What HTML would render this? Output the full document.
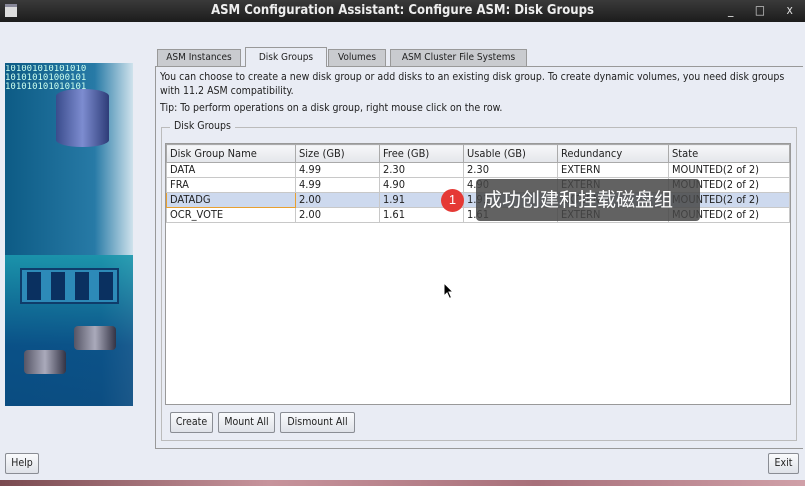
<!DOCTYPE html><html><head><meta charset="utf-8"><style>
*{box-sizing:border-box}body{margin:0;width:805px;height:486px;overflow:hidden;background:#e9ecf4;font-family:"DejaVu Sans Condensed","DejaVu Sans","Liberation Sans",sans-serif;font-size:10px;color:#222;position:relative}
.a{position:absolute}
.tb{left:0;top:0;width:805px;height:22px;background:linear-gradient(#3a3a3a,#1c1c1c);color:#eee;font-weight:bold;font-size:13px;text-align:center;line-height:21px}
.tab{top:49px;height:17px;border:1px solid #999;border-bottom:none;background:#c9cbcf;line-height:16px;font-size:10px;white-space:nowrap;text-align:center;overflow:hidden}
.btn{border:1px solid #8a8d94;border-radius:2px;background:linear-gradient(#fafbfd,#dfe2e8);height:21px;line-height:19px;text-align:center;font-size:10.5px}
table{border-collapse:collapse;font-size:11px}
td{border:1px solid #c8c8c8;height:15px;padding:0 3px;line-height:14px;white-space:nowrap}
th{border:1px solid #aaa;background:linear-gradient(#f6f7f9,#e4e6ea);font-weight:normal;text-align:left;height:18px;padding:0 3px}
</style></head><body>
<div class="a tb">ASM Configuration Assistant: Configure ASM: Disk Groups</div>
<div class="a" style="left:5px;top:4px;width:12px;height:13px;background:#ddd;border-top:3px solid #889"></div>
<div class="a" style="left:728px;top:3px;color:#ddd;font-size:12px;letter-spacing:9px">_ □ x</div>
<div class="a" style="left:5px;top:63px;width:128px;height:343px;background:linear-gradient(90deg,#0b5f8f 0,#1a6f9c 75%,#b8d4e2 100%)"></div>
<div class="a" style="left:5px;top:63px;width:128px;height:192px;background:linear-gradient(90deg,#0d5b85 0,#277aa6 70%,#cfe2ec 100%)"></div>
<div class="a" style="left:5px;top:255px;width:128px;height:151px;background:linear-gradient(#1c98ad,#0a4f86 60%,#0a4a7f);opacity:.9"></div>
<div class="a" style="left:5px;top:65px;color:#cfe;font-family:'DejaVu Sans Mono';font-size:9px;line-height:9px;width:128px;overflow:hidden;white-space:nowrap">101001010101010<br>101010101000101<br>101010101010101</div>
<div class="a" style="left:56px;top:89px;width:53px;height:58px;border-radius:26px/7px;background:linear-gradient(90deg,#3a4c8c,#7d8cd0,#2e3c78)"></div>
<div class="a" style="left:20px;top:268px;width:99px;height:36px;background:#2d8ab8;border:2px solid #0f3c6a"></div>
<div class="a" style="left:27px;top:272px;width:14px;height:28px;background:#0a3060"></div><div class="a" style="left:51px;top:272px;width:14px;height:28px;background:#0a3060"></div><div class="a" style="left:75px;top:272px;width:14px;height:28px;background:#0a3060"></div><div class="a" style="left:99px;top:272px;width:14px;height:28px;background:#0a3060"></div>
<div class="a" style="left:24px;top:350px;width:42px;height:24px;background:linear-gradient(90deg,#556,#aab,#334);border-radius:4px"></div>
<div class="a" style="left:74px;top:326px;width:42px;height:24px;background:linear-gradient(90deg,#556,#aab,#334);border-radius:4px"></div>
<div class="a tab" style="left:157px;width:84px">ASM Instances</div>
<div class="a tab" style="left:245px;top:47px;height:20px;width:82px;line-height:20px;background:#e9ecf4;z-index:2">Disk Groups</div>
<div class="a tab" style="left:328px;width:58px">Volumes</div>
<div class="a tab" style="left:390px;width:137px">ASM Cluster File Systems</div>
<div class="a" style="left:155px;top:66px;width:648px;height:383px;border:1px solid #999;border-right:none"></div>
<div class="a" style="left:160px;top:70px;width:640px;font-size:10.5px;line-height:14px">You can choose to create a new disk group or add disks to an existing disk group. To create dynamic volumes, you need disk groups with 11.2 ASM compatibility.</div>
<div class="a" style="left:160px;top:102px;font-size:10.5px">Tip: To perform operations on a disk group, right mouse click on the row.</div>
<div class="a" style="left:161px;top:127px;width:636px;height:314px;border:1px solid #bbb"></div>
<div class="a" style="left:170px;top:120px;background:#e9ecf4;padding:0 4px;font-size:10.5px">Disk Groups</div>
<div class="a" style="left:165px;top:143px;width:626px;height:262px;background:#fff;border:1px solid #999">
<table style="width:624px"><tr><th style="width:129px">Disk Group Name</th><th style="width:84px">Size (GB)</th><th style="width:84px">Free (GB)</th><th style="width:94px">Usable (GB)</th><th style="width:111px">Redundancy</th><th>State</th></tr>
<tr><td>DATA</td><td>4.99</td><td>2.30</td><td>2.30</td><td>EXTERN</td><td>MOUNTED(2 of 2)</td></tr>
<tr><td>FRA</td><td>4.99</td><td>4.90</td><td>4.90</td><td>EXTERN</td><td>MOUNTED(2 of 2)</td></tr>
<tr style="background:#cdd9ee"><td style="border:1px solid #e8a030">DATADG</td><td>2.00</td><td>1.91</td><td>1.91</td><td>EXTERN</td><td>MOUNTED(2 of 2)</td></tr>
<tr><td>OCR_VOTE</td><td>2.00</td><td>1.61</td><td>1.61</td><td>EXTERN</td><td>MOUNTED(2 of 2)</td></tr></table></div>
<div class="a" style="left:476px;top:179px;width:224px;height:42px;background:rgba(70,70,70,.85);border-radius:4px;color:#fff;font-family:'Noto Sans CJK SC',sans-serif;font-size:19px;line-height:40px;padding-left:7px">成功创建和挂载磁盘组</div>
<div class="a" style="left:441px;top:189px;width:23px;height:23px;border-radius:50%;background:#e53935;color:#fff;text-align:center;line-height:22px;font-size:13px;font-family:'Liberation Sans'">1</div>
<svg class="a" style="left:443px;top:282px" width="12" height="18" viewBox="0 0 12 18"><path d="M1 1 L1 14 L4 11 L6.5 16.5 L8.5 15.5 L6 10 L10 10 Z" fill="#000" stroke="#fff" stroke-width="1"/></svg>
<div class="a btn" style="left:170px;top:412px;width:43px">Create</div>
<div class="a btn" style="left:218px;top:412px;width:57px">Mount All</div>
<div class="a btn" style="left:280px;top:412px;width:75px">Dismount All</div>
<div class="a btn" style="left:5px;top:453px;width:34px">Help</div>
<div class="a btn" style="left:768px;top:453px;width:31px">Exit</div>
<div class="a" style="left:0;top:480px;width:805px;height:6px;background:linear-gradient(90deg,#7a4a50,#c7949c,#a8707a,#d0a0a8)"></div>
</body></html>
